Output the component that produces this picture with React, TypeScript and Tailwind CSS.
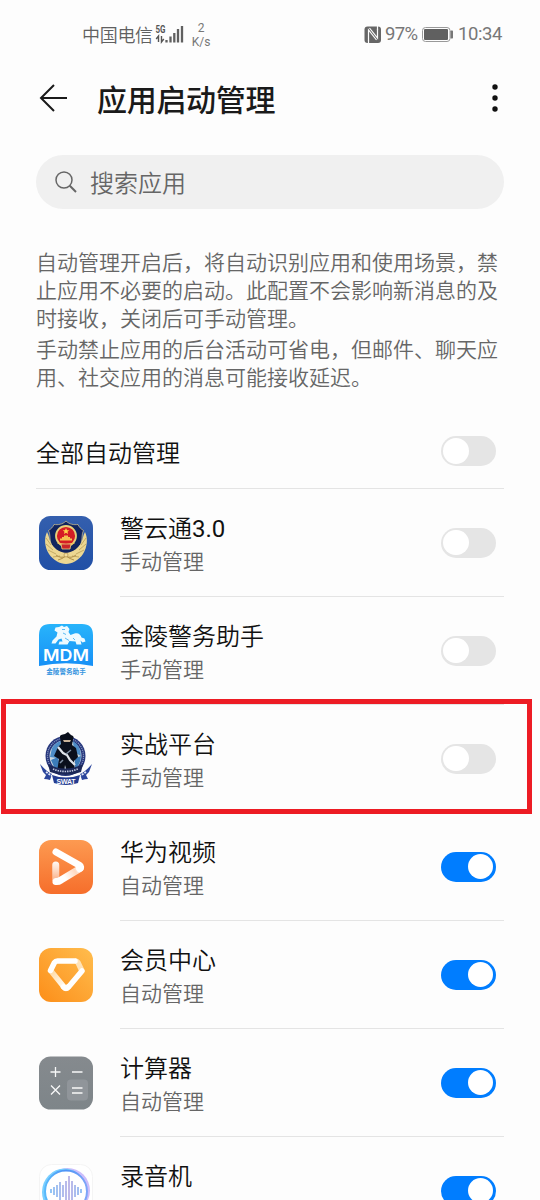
import type { ReactNode } from "react";

function PoliceIcon() {
  return (
    <svg viewBox="0 0 54 54" className="size-[54px]">
      <defs>
        <linearGradient id="pb" x1="0" y1="0" x2="0" y2="1">
          <stop offset="0" stopColor="#345fae" />
          <stop offset="1" stopColor="#2150a6" />
        </linearGradient>
      </defs>
      <rect width="54" height="54" rx="11.5" fill="url(#pb)" />
      <path d="M27 5C23.500 8.500 19 9 15 8.500C14 11 12 13 9.500 14.500C11.500 18 10.500 22 11.500 26C13 33 21 37 27 40C33 37 41 33 42.500 26C43.500 22 42.500 18 44.500 14.500C42 13 40 11 39 8.500C35 9 30.500 8.500 27 5Z" fill="#10245f" stroke="#d9c58c" strokeWidth=".7" />
      <path d="M8 16C5 22 5.500 31 10 38C14 44 21 48 27 48C33 48 40 44 44 38C48.500 31 49 22 46 16C44 19 44 23 42.500 26C40 32 34 36 27 37C20 36 14 32 11.500 26C10 23 10 19 8 16Z" fill="#ecd792" />
      <path d="M7 22l5 7M7 28l7 6M9 34l8 4M14 41l7-1M47 22l-5 7M47 28l-7 6M45 34l-8 4M40 41l-7-1" stroke="#b89d58" strokeWidth=".8" fill="none" />
      <circle cx="27" cy="20" r="10" fill="#d51d25" stroke="#e8cf7a" strokeWidth="1.800" />
      <path d="M27 12l1 2.200 2.300.1-1.800 1.500.6 2.200-2.100-1.200-2.100 1.200.6-2.200-1.800-1.500 2.300-.1z" fill="#ffd44a" />
      <path d="M21 24.500h12v-2h-2V21h-2v-1.500h-4V21h-2v1.500h-2z" fill="#f4c350" />
      <path d="M18.500 27q8.500 3 17 0" stroke="#f0c35b" strokeWidth="1.200" fill="none" />
      <path d="M22 28h10l-1 5h-8z" fill="#c9242a" stroke="#e8cf7a" strokeWidth=".8" />
      <path d="M17 39q5 4 10 1q5 3 10-1M19 44q4-1 8-4q4 3 8 4" stroke="#b0904a" strokeWidth="1" fill="none" />
      <circle cx="27" cy="39" r="2" fill="#f2dda0" stroke="#b0904a" strokeWidth=".7" />
    </svg>
  );
}

function MdmIcon() {
  return (
    <svg viewBox="0 0 54 54" className="size-[54px]">
      <defs>
        <linearGradient id="md" x1="0" y1="0" x2="0" y2="1">
          <stop offset="0" stopColor="#28b4fb" />
          <stop offset="1" stopColor="#1790f6" />
        </linearGradient>
      </defs>
      <path d="M0 42V11Q0 0 11 0H43Q54 0 54 11V42Q27 36.500 0 42Z" fill="url(#md)" />
      <path d="M20 3l3-1.500 2 1.500 3-1 2.500 3-1 3 2 3 4-1.500c4-1 6 1 7 4l3 1 1 3-3 1-2-2 1 4h-5l-1-3-6-.5-2 3.500h-9l1-3h3l-1-3-3 1-3 4h-4l1-3 4-4 1-4-3-2 1-3z" fill="#eefaff" />
      <path d="M23 5.500h3M24 9l3 1.500M26 14l4 2.500M34 14l2 2" stroke="#49b4f2" strokeWidth=".9" fill="none" />
      <text x="27" y="37" textAnchor="middle" fontFamily="Inter, sans-serif" fontWeight="600" fontSize="16.500" fill="#fff" textLength="46" lengthAdjust="spacingAndGlyphs">MDM</text>
      <text x="27" y="50" textAnchor="middle" fontFamily="Noto Sans CJK SC, sans-serif" fontWeight="700" fontSize="6.600" fill="#3795df">金陵警务助手</text>
    </svg>
  );
}

function SwatIcon() {
  return (
    <svg viewBox="0 0 54 54" className="size-[54px]">
      <circle cx="26.500" cy="24" r="20" fill="#26367c" />
      <circle cx="26.500" cy="24" r="18" fill="none" stroke="#8e9dc4" strokeWidth="1.300" strokeDasharray="1 1" />
      <circle cx="26.500" cy="24" r="16" fill="#c9d6de" />
      <path d="M13 16q4-6 9-7l-1 9-3 8-7-1zM34 9q8 5 8 15l-7-4z" fill="#4d8cc6" />
      <path d="M12 28l7-3 2 10-5 2zM36 26l6-2q0 8-6 13z" fill="#3c7cb9" />
      <path d="M21 5Q20 3 26 2L29 0L32 3Q36 4 34 7L33 13L37 16L39 25L35 29L36 40H28L26 33L25 40H18L20 27L15 24L19 15L22 12Z" fill="#0a0f1c" />
      <path d="M24 8h8l-1 2h-6z" fill="#c9b39a" />
      <path d="M19 15l5 6 4 2 3 5 5 5" stroke="#dfe4ea" strokeWidth="2.200" fill="none" />
      <path d="M32 18l-5 4M24 28l-3 3" stroke="#8292a6" strokeWidth="1.500" />
      <path d="M9 32q17 9 35 0l-2 8q-15 6-31 0z" fill="#1c2858" />
      <path d="M14 37q12 5 25 0" stroke="#c3cbe0" strokeWidth="1.700" strokeDasharray="1.400 1" fill="none" />
      <path d="M1 32q7 8 12 10l-2 6q-3-1-6-1l2-4-3-3zM53 32q-7 8-12 10l2 6q3-1 6-1l-2-4 3-3z" fill="#2b459c" />
      <path d="M7 40l6 4M47 40l-6 4" stroke="#e2e8f5" strokeWidth="1.800" strokeDasharray="2 1" />
      <path d="M13 43q14 5 28 0l-2 8q-12 4-24 0z" fill="#243c90" />
      <text x="27" y="51.500" textAnchor="middle" fontFamily="Liberation Sans, sans-serif" fontWeight="700" fontSize="7" fill="#fff" textLength="19">SWAT</text>
    </svg>
  );
}

function VideoIcon() {
  return (
    <svg viewBox="0 0 54 54" className="size-[54px]">
      <defs>
        <linearGradient id="vb" x1="0" y1="0" x2="0" y2="1">
          <stop offset="0" stopColor="#fd9a51" />
          <stop offset="1" stopColor="#f66e2b" />
        </linearGradient>
        <linearGradient id="vs" x1="0" y1="0" x2="0" y2="1">
          <stop offset="0" stopColor="#fff" stopOpacity=".95" />
          <stop offset=".8" stopColor="#fff" stopOpacity=".5" />
        </linearGradient>
        <linearGradient id="vf" gradientUnits="userSpaceOnUse" x1="19" y1="42" x2="42" y2="28">
          <stop offset=".3" stopColor="#fff" />
          <stop offset=".75" stopColor="#ffd9c0" />
          <stop offset="1" stopColor="#fff" />
        </linearGradient>
      </defs>
      <rect width="54" height="54" rx="12" fill="url(#vb)" />
      <path d="M13.250 25a3.500 3.500 0 0 1 7 0V41H13.250Z" fill="url(#vs)" />
      <path d="M17 41.500Q19 42 22 40L41 28.500" stroke="url(#vf)" strokeWidth="7" strokeLinecap="round" fill="none" />
      <path d="M17 12L40 25Q43 27 40.500 28.500" stroke="#fff" strokeWidth="7" strokeLinecap="round" strokeLinejoin="round" fill="none" />
    </svg>
  );
}

function MemberIcon() {
  return (
    <svg viewBox="0 0 54 54" className="size-[54px]">
      <defs>
        <linearGradient id="mb" x1="1" y1="0" x2="0" y2="1">
          <stop offset="0" stopColor="#ffbd4e" />
          <stop offset="1" stopColor="#fc8e19" />
        </linearGradient>
        <linearGradient id="mf" gradientUnits="userSpaceOnUse" x1="12" y1="22" x2="27" y2="40">
          <stop offset="0" stopColor="#ffd9a0" />
          <stop offset="1" stopColor="#fff" />
        </linearGradient>
      </defs>
      <rect width="54" height="54" rx="12" fill="url(#mb)" />
      <path d="M12 23L25 39Q27 41.500 29 39" stroke="url(#mf)" strokeWidth="5.500" strokeLinejoin="round" strokeLinecap="round" fill="none" />
      <path d="M36 13Q38 13 39 14.500L43 23" stroke="#ffe3b8" strokeWidth="5.500" fill="none" />
      <path d="M11.500 22.500L15.500 14.500Q16.500 13 18.500 13H36" stroke="#fff" strokeWidth="5.500" strokeLinecap="round" fill="none" />
      <path d="M43 23L29.500 39Q27 42 24.500 39" stroke="#fff" strokeWidth="5.500" strokeLinecap="round" fill="none" />
    </svg>
  );
}

function CalculatorIcon() {
  return (
    <svg viewBox="0 0 54 54" className="size-[54px]">
      <defs>
        <linearGradient id="cb" x1="0" y1="0" x2="0" y2="1">
          <stop offset="0" stopColor="#858a8e" />
          <stop offset="1" stopColor="#7e8589" />
        </linearGradient>
      </defs>
      <rect y=".5" width="54" height="53" rx="11.500" fill="url(#cb)" />
      <rect x="28" y="23.500" width="21" height="21" rx="4" fill="#90959a" />
      <path d="M11.500 16h10M16.500 11v10M33 16h10.500M12 29.500l9 9M21 29.500l-9 9M33 32h10.500M33 37h10.500" stroke="#f7f8f8" strokeWidth="1.300" fill="none" />
    </svg>
  );
}

const WAVE = [
  [12, 2], [15, 4], [18, 6], [21, 9], [24, 6], [27, 10], [30, 15], [33, 10], [36, 6], [39, 4], [42, 2],
];

function RecorderIcon() {
  return (
    <svg viewBox="0 0 54 54" className="size-[54px]">
      <defs>
        <linearGradient id="rb" x1="0" y1="0" x2="1" y2="0">
          <stop offset="0" stopColor="#59b9fb" />
          <stop offset=".5" stopColor="#4e93f6" />
          <stop offset="1" stopColor="#7fa5f8" />
        </linearGradient>
        <linearGradient id="rw" gradientUnits="userSpaceOnUse" x1="10" y1="0" x2="44" y2="0">
          <stop offset="0" stopColor="#60aef3" />
          <stop offset=".6" stopColor="#a59ade" />
          <stop offset="1" stopColor="#61a9f2" />
        </linearGradient>
      </defs>
      <rect x=".5" y=".5" width="53" height="53" rx="12" fill="#fff" stroke="#f4f4f4" />
      <ellipse cx="28.500" cy="26.500" rx="22.500" ry="22.500" fill="#cdbdfb" />
      <ellipse cx="25.500" cy="28" rx="22.500" ry="23.500" fill="#79cfff" />
      <circle cx="27" cy="27.500" r="21" fill="#fff" stroke="url(#rb)" strokeWidth="2" />
      {WAVE.map(([x, h]) => (
        <rect key={x} x={x - 0.7} y={27 - h} width="1.400" height={2 * h} fill="url(#rw)" />
      ))}
    </svg>
  );
}

function Toggle({ on }: { on: boolean }) {
  return (
    <div
      className={
        on
          ? "flex h-[30px] w-[55px] shrink-0 items-center justify-end rounded-full bg-[#007dff] px-[2.5px]"
          : "flex h-[30px] w-[55px] shrink-0 items-center rounded-full bg-[#e5e5e5] px-[2.5px]"
      }
    >
      <div className="size-[25.5px] rounded-full bg-white" />
    </div>
  );
}

interface AppRowProps {
  name: ReactNode;
  mode?: string;
  on: boolean;
  icon: ReactNode;
  highlighted?: boolean;
}

function AppRow({ name, mode, on, icon, highlighted }: AppRowProps) {
  return (
    <div className="relative flex h-[108px] shrink-0 pl-[39px]">
      <div className="flex h-[108px] w-[81px] shrink-0 items-center">{icon}</div>
      <div className="flex w-[384px] items-center justify-between border-b border-[#e4e4e4] pr-[8.5px]">
        <div className="h-[69px] pt-[4px]">
          <div className="h-[34px] text-[24px] leading-[34px] font-[350] text-[#111]">{name}</div>
          {mode && <div className="h-[32px] text-[21px] leading-[32px] font-[350] text-[#666]">{mode}</div>}
        </div>
        <Toggle on={on} />
      </div>
      {highlighted && (
        <div className="absolute top-[-6px] left-[1px] z-10 h-[115px] w-[531px] border-[5px] border-[#ed1c24]" />
      )}
    </div>
  );
}

function StatusBar() {
  return (
    <div className="flex h-[69px] shrink-0 items-center pl-[82px] text-[18px] font-[350] text-[#606060]">
      <span className="w-[73px] tracking-[-0.3px]">中国电信</span>
      <svg width="29" height="20" viewBox="0 0 29 20" className="shrink-0">
        <text x="0.500" y="8" fontFamily="Roboto, sans-serif" fontSize="10" fontWeight="700" fill="#555" textLength="10" lengthAdjust="spacingAndGlyphs">5G</text>
        <path d="M3.500 17v-6l-2.300 3M6.500 11v6l2.300-3" stroke="#555" strokeWidth="1.400" fill="none" />
        <path d="M11.500 15v2.500M15.500 11.500v6M19.300 8v9.500M23 4v13.500M27 1v16.500" stroke="#606060" strokeWidth="2.300" />
      </svg>
      <div className="ml-[6px] flex w-[22px] flex-col items-center font-[Roboto] text-[12px] leading-[14px] font-normal text-[#777]">
        <span>2</span>
        <span>K/s</span>
      </div>
      <svg width="18" height="18" viewBox="0 0 18 18" className="ml-[152px] shrink-0">
        <rect x=".5" y=".5" width="16.500" height="16.500" rx="3" fill="#666" />
        <path d="M4.500 15V4l8 10M5.500 2l8 10V3" stroke="#fdfdfd" strokeWidth="1.200" fill="none" />
        <path d="M4.500 14.500v3M13.500 0v4" stroke="#fdfdfd" strokeWidth="1.200" />
      </svg>
      <span className="ml-[3px] w-[36px] font-[Roboto] text-[18.5px] font-normal tracking-[-0.7px] text-[#777]">97%</span>
      <svg width="33" height="17" viewBox="0 0 33 17" className="shrink-0">
        <rect x="1.500" y="1.500" width="27.500" height="14" rx="3" fill="none" stroke="#999" />
        <rect x="3" y="3" width="24" height="11" rx="1" fill="#606060" />
        <rect x="29.500" y="4.500" width="2.500" height="8" rx=".7" fill="#777" />
      </svg>
      <span className="ml-[4px] font-[Roboto] text-[18.5px] font-normal tracking-[-0.4px] text-[#777]">10:34</span>
    </div>
  );
}

export default function App() {
  return (
    <div className="flex h-[1200px] w-[540px] flex-col overflow-hidden bg-[#fdfdfd] font-['Noto_Sans_CJK_SC',sans-serif]">
      <StatusBar />
      <header className="flex h-[57px] shrink-0 items-center pl-[39px]">
        <svg width="29" height="30" viewBox="0 0 29 30" fill="none" stroke="#1a1a1a" strokeWidth="2">
          <path d="M28 15H2M15 2L2 15L15 28" />
        </svg>
        <h1 className="ml-[29px] w-[380px] text-[30px] leading-[54px] font-medium tracking-[-0.3px] text-[#1a1a1a]">应用启动管理</h1>
        <svg width="6" height="30" viewBox="0 0 6 30" className="ml-[15px]" fill="#111">
          <circle cx="3" cy="4" r="2.700" />
          <circle cx="3" cy="15" r="2.700" />
          <circle cx="3" cy="26" r="2.700" />
        </svg>
      </header>
      <div className="mt-[29px] ml-[36px] flex h-[54px] w-[468px] shrink-0 items-center rounded-full bg-[#f0f0f0] pl-[18px]">
        <svg width="24" height="24" viewBox="0 0 24 24" fill="none" stroke="#666">
          <circle cx="10" cy="10" r="8" strokeWidth="1.500" />
          <path d="M15.800 15.800L22 22" strokeWidth="2" />
        </svg>
        <span className="ml-[12px] text-[24px] leading-[54px] font-[350] text-[#666]">搜索应用</span>
      </div>
      <div className="mt-[38px] ml-[36px] h-[177px] w-[480px] shrink-0 text-[21px] leading-[28px] font-[350] whitespace-nowrap text-[#666]">
        <p>自动管理开启后，将自动识别应用和使用场景，禁<br />止应用不必要的启动。此配置不会影响新消息的及<br />时接收，关闭后可手动管理。</p>
        <p className="mt-[3px]">手动禁止应用的后台活动可省电，但邮件、聊天应<br />用、社交应用的消息可能接收延迟。</p>
      </div>
      <div className="ml-[36px] flex h-[65px] w-[468px] shrink-0 items-start justify-between border-b border-[#e4e4e4] pr-[8.5px]">
        <span className="text-[24px] leading-[56px] font-[350] text-[#111]">全部自动管理</span>
        <div className="pt-[12px]">
          <Toggle on={false} />
        </div>
      </div>
      <div className="flex shrink-0 flex-col font-[Roboto,'Noto_Sans_CJK_SC',sans-serif]">
        <AppRow
          name={<>警云通<span className="font-normal">3.0</span></>}
          mode="手动管理"
          on={false}
          icon={<PoliceIcon />}
        />
        <AppRow name="金陵警务助手" mode="手动管理" on={false} icon={<MdmIcon />} />
        <AppRow name="实战平台" mode="手动管理" on={false} icon={<SwatIcon />} highlighted />
        <AppRow name="华为视频" mode="自动管理" on icon={<VideoIcon />} />
        <AppRow name="会员中心" mode="自动管理" on icon={<MemberIcon />} />
        <AppRow name="计算器" mode="自动管理" on icon={<CalculatorIcon />} />
        <AppRow name="录音机" on icon={<RecorderIcon />} />
      </div>
    </div>
  );
}
